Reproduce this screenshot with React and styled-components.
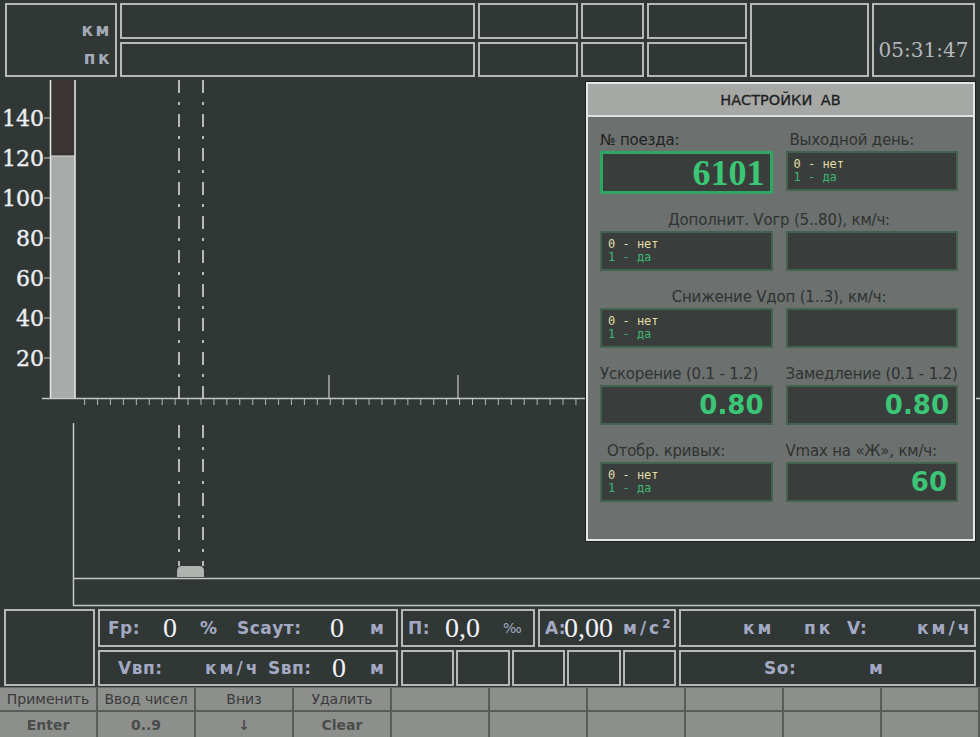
import React from "react";
import styled, { createGlobalStyle } from "styled-components";

const GlobalStyle = createGlobalStyle`
  html, body { margin: 0; padding: 0; background: #313735; }
  body { width: 980px; height: 737px; overflow: hidden; font-family: "DejaVu Sans", sans-serif; }
  #root { width: 980px; height: 737px; }
`;

const BORDER = "#b6bab6";
const BG = "#313735";

const Screen = styled.div`
  width: 980px;
  height: 737px;
  background: ${BG};
  display: flex;
  flex-direction: column;
  overflow: hidden;
`;

/* ---------- top bar ---------- */
const TopBar = styled.div`
  height: 80px;
  flex: none;
  box-sizing: border-box;
  padding: 3px 0 3px 5px;
  display: grid;
  grid-template-columns: 112px 355px 100px 63px 100px 119px 103px;
  grid-template-rows: 1fr 1fr;
  gap: 3px;
`;

const Cell = styled.div`
  border: 2px solid ${BORDER};
  background: ${BG};
  grid-row: ${(p) => (p.$tall ? "span 2" : "auto")};
  box-sizing: border-box;
`;

const LabelCell = styled(Cell)`
  display: flex;
  flex-direction: column;
  align-items: flex-end;
  justify-content: center;
  gap: 6px;
  padding: 7px 3px 0 0;
`;

const TopUnit = styled.span`
  font-family: "DejaVu Sans", sans-serif;
  font-weight: bold;
  font-size: 17px;
  line-height: 22px;
  letter-spacing: 2.5px;
  color: #a4aab8;
`;

const ClockCell = styled(Cell)`
  display: flex;
  align-items: center;
  justify-content: center;
  padding-top: 20px;
`;

const Clock = styled.span`
  font-family: "DejaVu Serif", serif;
  font-size: 20px;
  color: #b4b8bc;
`;

/* ---------- main ---------- */
const Main = styled.div`
  position: relative;
  height: 527px;
  flex: none;
`;

const ChartSvg = styled.svg`
  display: block;
`;

/* ---------- dialog ---------- */
const Dialog = styled.div`
  position: absolute;
  left: 586px;
  top: 2px;
  width: 389px;
  height: 459px;
  box-sizing: border-box;
  border: 2px solid #e4e8e4;
  background: #6c706e;
  display: flex;
  flex-direction: column;
  box-shadow: 0 0 0 1px #1e2220;
`;

const DialogTitle = styled.div`
  height: 31px;
  flex: none;
  background: #a6a8a6;
  border-bottom: 2px solid #dde1dd;
  display: flex;
  align-items: center;
  justify-content: center;
  font-family: "DejaVu Sans", sans-serif;
  font-size: 14.5px;
  word-spacing: 4px;
  color: #1f211f;
  -webkit-text-stroke: 0.3px #1f211f;
`;

const DialogBody = styled.div`
  padding: 13px 15px 0 12px;
`;

const Section = styled.div`
  display: grid;
  grid-template-columns: 1fr 1fr;
  column-gap: 13px;
  row-gap: 1px;
  margin-bottom: 16px;
`;

const FieldLabel = styled.div`
  grid-column: ${(p) => (p.$full ? "1 / span 2" : "auto")};
  text-align: ${(p) => (p.$full ? "center" : "left")};
  padding-left: ${(p) => p.$indent || 0}px;
  height: 20px;
  line-height: 20px;
  font-family: "DejaVu Sans", sans-serif;
  font-size: 15px;
  letter-spacing: -0.2px;
  color: ${(p) => (p.$dark ? "#1f2321" : "#2f3331")};
  white-space: nowrap;
`;

const Box = styled.div`
  box-sizing: border-box;
  height: ${(p) => (p.$active ? 43 : 40)}px;
  background: #393d3b;
  border: ${(p) => (p.$active ? "3px solid #2fa764" : "2px solid #42644f")};
  display: flex;
  align-items: center;
  justify-content: flex-end;
  padding-right: ${(p) => p.$pr || 6}px;
`;

const OptionBox = styled(Box)`
  flex-direction: column;
  align-items: flex-start;
  justify-content: flex-start;
  padding: 5px 0 0 6px;
`;

const OptLine = styled.div`
  font-family: "DejaVu Sans Mono", monospace;
  font-size: 12px;
  line-height: 13px;
  color: ${(p) => (p.$yes ? "#3fb574" : "#e2dea6")};
`;

const SerifValue = styled.span`
  font-family: "Liberation Serif", serif;
  font-weight: bold;
  font-size: 36px;
  color: #3bc676;
  line-height: 1;
`;

const SansValue = styled.span`
  font-family: "DejaVu Sans", sans-serif;
  font-weight: bold;
  font-size: 26px;
  color: #3bc676;
  line-height: 1;
`;

/* ---------- status ---------- */
const Status = styled.div`
  height: 80px;
  flex: none;
  box-sizing: border-box;
  padding: 2px 0 0 4px;
  display: grid;
  grid-template-columns: 91px 300px 275px 297px;
  grid-template-rows: 38px 36px;
  column-gap: 3px;
  row-gap: 3px;
`;

const StatBox = styled.div`
  box-sizing: border-box;
  border: 2px solid ${BORDER};
  grid-row: ${(p) => (p.$tall ? "span 2" : "auto")};
  display: grid;
  grid-template-columns: ${(p) => p.$cols || "1fr"};
  padding-left: ${(p) => p.$pad || 0}px;
  align-items: center;
  white-space: nowrap;
  overflow: hidden;
`;

const StatGroup = styled.div`
  display: grid;
  grid-template-columns: ${(p) => p.$cols};
  gap: ${(p) => p.$gap}px;
`;

const Lbl = styled.span`
  font-family: "DejaVu Sans", sans-serif;
  font-weight: bold;
  font-size: 17px;
  letter-spacing: 0.5px;
  color: #a3a9c3;
`;

const Unit = styled(Lbl)`
  letter-spacing: 3px;
`;

const Small = styled.span`
  font-family: "DejaVu Sans", sans-serif;
  font-size: 14px;
  color: #a3a9c3;
`;

const Sup = styled.sup`
  font-size: 12px;
  vertical-align: 6px;
  line-height: 0;
`;

const Num = styled.span`
  font-family: "Liberation Serif", serif;
  font-size: 28px;
  color: #f3f3fb;
  line-height: 1;
`;

/* ---------- key bar ---------- */
const KeyBar = styled.div`
  flex: 1;
  background: #8d8f8d;
  border-top: 1px solid #6a6c6a;
  display: grid;
  grid-template-columns: repeat(10, 1fr);
  grid-template-rows: 24px 1fr;
`;

const Key = styled.div`
  box-sizing: border-box;
  border-right: 2px solid #5a5c5a;
  border-bottom: ${(p) => (p.$top ? "2px solid #5a5c5a" : "none")};
  display: flex;
  align-items: center;
  justify-content: center;
  font-family: "DejaVu Sans", sans-serif;
  font-size: 14px;
  font-weight: ${(p) => (p.$top ? "normal" : "bold")};
  color: ${(p) => (p.$top ? "#393b39" : "#4a4c4a")};
  white-space: nowrap;
  overflow: hidden;
`;

/* ---------- chart drawing ---------- */
const scale = [140, 120, 100, 80, 60, 40, 20];
const yOf = (v) => 318 - v * 2;
const ticks = Array.from({ length: 39 }, (_, i) => 84.6 + i * 12.93);

function Chart() {
  const line = "#c4c8c4";
  return (
    <ChartSvg width="980" height="527" viewBox="0 0 980 527">
      <rect x="50" y="0" width="25" height="76" fill="#3a3433" />
      <rect x="50" y="76" width="25" height="242" fill="#a9abaa" />
      <line x1="50.5" y1="0" x2="50.5" y2="318" stroke="#e8ece8" strokeWidth="1.5" />
      <line x1="75" y1="0" x2="75" y2="318" stroke="#e8ece8" strokeWidth="1.5" />
      <line x1="50" y1="76" x2="75" y2="76" stroke="#d8dcd8" strokeWidth="1" />
      {scale.map((v) => (
        <g key={v}>
          <line x1="44" y1={yOf(v)} x2="50" y2={yOf(v)} stroke="#d0d4d0" strokeWidth="1" />
          <text
            x="44"
            y={yOf(v) + 8}
            textAnchor="end"
            fontFamily="DejaVu Serif, serif"
            fontSize="22"
            fill="#eceff4"
            stroke="#eceff4"
            strokeWidth="0.4"
          >
            {v}
          </text>
        </g>
      ))}
      <line x1="42" y1="318.5" x2="980" y2="318.5" stroke={line} strokeWidth="1.5" />
      {ticks.map((x, i) => (
        <line key={i} x1={x} y1="319" x2={x} y2="325" stroke="#b4b8b4" strokeWidth="1" />
      ))}
      <line x1="329" y1="295" x2="329" y2="318" stroke="#c8ccc8" strokeWidth="1.2" />
      <line x1="458" y1="295" x2="458" y2="318" stroke="#c8ccc8" strokeWidth="1.2" />
      {[179, 203].map((x) => (
        <g key={x}>
          <line x1={x} y1="0" x2={x} y2="318" stroke="#e2e6e2" strokeWidth="1.5" strokeDasharray="13 9 3 9" />
          <line x1={x} y1="345" x2={x} y2="486" stroke="#e2e6e2" strokeWidth="1.5" strokeDasharray="13 9 3 9" />
        </g>
      ))}
      <line x1="73.5" y1="343" x2="73.5" y2="526" stroke={line} strokeWidth="1.5" />
      <line x1="73" y1="498.5" x2="980" y2="498.5" stroke={line} strokeWidth="1.5" />
      <line x1="73" y1="525.5" x2="980" y2="525.5" stroke={line} strokeWidth="1.5" />
      <path d="M177 497 L177 491 Q177 486 182 486 L199 486 Q204 486 204 491 L204 497 Z" fill="#b0b2b0" />
    </ChartSvg>
  );
}

const Options = () => (
  <>
    <OptLine>0 - нет</OptLine>
    <OptLine $yes>1 - да</OptLine>
  </>
);

const keysTop = ["Применить", "Ввод чисел", "Вниз", "Удалить", "", "", "", "", "", ""];
const keysBottom = ["Enter", "0..9", "↓", "Clear", "", "", "", "", "", ""];

export default function App() {
  return (
    <Screen>
      <GlobalStyle />
      <TopBar>
        <LabelCell $tall>
          <TopUnit>км</TopUnit>
          <TopUnit>пк</TopUnit>
        </LabelCell>
        <Cell />
        <Cell />
        <Cell />
        <Cell />
        <Cell $tall />
        <ClockCell $tall>
          <Clock>05:31:47</Clock>
        </ClockCell>
        <Cell />
        <Cell />
        <Cell />
        <Cell />
      </TopBar>

      <Main>
        <Chart />
        <Dialog>
          <DialogTitle>НАСТРОЙКИ АВ</DialogTitle>
          <DialogBody>
            <Section>
              <FieldLabel $dark>№ поезда:</FieldLabel>
              <FieldLabel $indent={4}>Выходной день:</FieldLabel>
              <Box $active $pr={5}>
                <SerifValue>6101</SerifValue>
              </Box>
              <OptionBox>
                <Options />
              </OptionBox>
            </Section>
            <Section>
              <FieldLabel $full>Дополнит. Vогр (5..80), км/ч:</FieldLabel>
              <OptionBox>
                <Options />
              </OptionBox>
              <Box />
            </Section>
            <Section>
              <FieldLabel $full>Снижение Vдоп (1..3), км/ч:</FieldLabel>
              <OptionBox>
                <Options />
              </OptionBox>
              <Box />
            </Section>
            <Section>
              <FieldLabel>Ускорение (0.1 - 1.2)</FieldLabel>
              <FieldLabel>Замедление (0.1 - 1.2)</FieldLabel>
              <Box $pr={7}>
                <SansValue>0.80</SansValue>
              </Box>
              <Box $pr={7}>
                <SansValue>0.80</SansValue>
              </Box>
            </Section>
            <Section>
              <FieldLabel $indent={7}>Отобр. кривых:</FieldLabel>
              <FieldLabel>Vmax на «Ж», км/ч:</FieldLabel>
              <OptionBox>
                <Options />
              </OptionBox>
              <Box $pr={9}>
                <SansValue>60</SansValue>
              </Box>
            </Section>
          </DialogBody>
        </Dialog>
      </Main>

      <Status>
        <StatBox $tall />
        <StatBox $cols="55px 37px 37px 93px 40px 1fr" $pad={8}>
          <Lbl>Fр:</Lbl>
          <Num>0</Num>
          <Lbl>%</Lbl>
          <Lbl>Sсаут:</Lbl>
          <Num>0</Num>
          <Unit>м</Unit>
        </StatBox>
        <StatGroup $cols="134px 1fr" $gap={3}>
          <StatBox $cols="37px 58px 1fr" $pad={5}>
            <Lbl>П:</Lbl>
            <Num>0,0</Num>
            <Small>‰</Small>
          </StatBox>
          <StatBox $cols="19px 59px 1fr" $pad={5}>
            <Lbl>А:</Lbl>
            <Num>0,00</Num>
            <Unit>
              м/с<Sup>2</Sup>
            </Unit>
          </StatBox>
        </StatGroup>
        <StatBox $cols="61px 43px 70px 1fr" $pad={62}>
          <Unit>км</Unit>
          <Unit>пк</Unit>
          <Lbl>V:</Lbl>
          <Unit>км/ч</Unit>
        </StatBox>
        <StatBox $cols="87px 63px 64px 38px 1fr" $pad={18}>
          <Lbl>Vвп:</Lbl>
          <Unit>км/ч</Unit>
          <Lbl>Sвп:</Lbl>
          <Num>0</Num>
          <Unit>м</Unit>
        </StatBox>
        <StatGroup $cols="repeat(5, 1fr)" $gap={2}>
          <StatBox />
          <StatBox />
          <StatBox />
          <StatBox />
          <StatBox />
        </StatGroup>
        <StatBox $cols="105px 1fr" $pad={83}>
          <Lbl>Sо:</Lbl>
          <Unit>м</Unit>
        </StatBox>
      </Status>

      <KeyBar>
        {keysTop.map((k, i) => (
          <Key key={"t" + i} $top>
            {k}
          </Key>
        ))}
        {keysBottom.map((k, i) => (
          <Key key={"b" + i}>{k}</Key>
        ))}
      </KeyBar>
    </Screen>
  );
}
